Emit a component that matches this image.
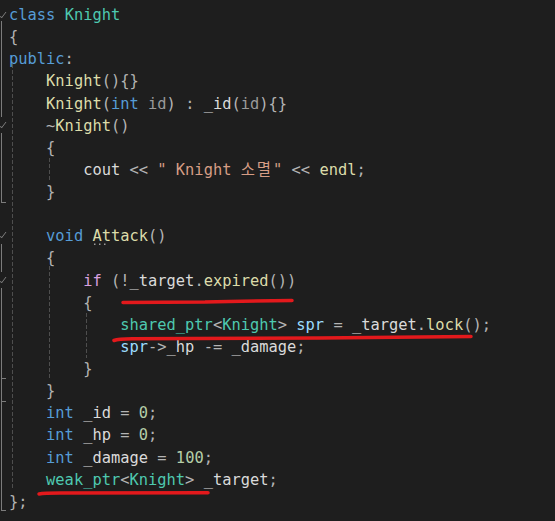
import React from 'react'

// VS dark theme token colours
const K = 'text-[#569cd6]' // keyword
const T = 'text-[#4ec9b0]' // type
const F = 'text-[#dcdcaa]' // function
const P = 'text-[#b4b4b4]' // punctuation / operator
const M = 'text-[#dadada]' // member / global
const V = 'text-[#9cdcfe]' // local
const G = 'text-[#9a9a9a]' // parameter
const S = 'text-[#d69d85]' // string
const N = 'text-[#b5cea8]' // number
const C = 'text-[#d8a0df]' // control flow
const KR = 'text-[#d69d85] tracking-[2px]' // hangul, a bit wider like the VS fallback

type Tok = [string, string]

const lines: Tok[][] = [
  [['class', K], [' ', P], ['Knight', T]],
  [['{', P]],
  [['public', K], [':', P]],
  [['    ', P], ['Knight', F], ['(){}', P]],
  [['    ', P], ['Knight', F], ['(', P], ['int', K], [' ', P], ['id', G], [') : ', P], ['_id', M], ['(', P], ['id', G], ['){}', P]],
  [['    ~', P], ['Knight', F], ['()', P]],
  [['    {', P]],
  [['        ', P], ['cout', M], [' << ', P], ['" Knight ', S], ['소멸', KR], ['"', S], [' << ', P], ['endl', F], [';', P]],
  [['    }', P]],
  [],
  [['    ', P], ['void', K], [' ', P], ['Attack', F], ['()', P]],
  [['    {', P]],
  [['        ', P], ['if', C], [' (!', P], ['_target', M], ['.', P], ['expired', F], ['())', P]],
  [['        {', P]],
  [['            ', P], ['shared_ptr', T], ['<', P], ['Knight', T], ['> ', P], ['spr', V], [' = ', P], ['_target', M], ['.', P], ['lock', F], ['();', P]],
  [['            ', P], ['spr', V], ['->', P], ['_hp', M], [' -= ', P], ['_damage', M], [';', P]],
  [['        }', P]],
  [['    }', P]],
  [['    ', P], ['int', K], [' ', P], ['_id', M], [' = ', P], ['0', N], [';', P]],
  [['    ', P], ['int', K], [' ', P], ['_hp', M], [' = ', P], ['0', N], [';', P]],
  [['    ', P], ['int', K], [' ', P], ['_damage', M], [' = ', P], ['100', N], [';', P]],
  [['    ', P], ['weak_ptr', T], ['<', P], ['Knight', T], ['> ', P], ['_target', M], [';', P]],
  [['};', P]],
]

function Margin() {
  const outline = '#7c7c7c'
  const guide = '#4e4e4e'
  return (
    <svg className="absolute left-0 top-0 pointer-events-none" width={555} height={521}>
      {/* outlining bar */}
      {[[21, 117], [133, 202], [244, 272], [288, 510]].map(([a, b]) => (
        <line key={a} x1={1.5} y1={a} x2={1.5} y2={b} stroke={outline} />
      ))}
      {[202, 378, 401, 510].map((y) => (
        <line key={y} x1={1} y1={y + 0.5} x2={6} y2={y + 0.5} stroke={outline} />
      ))}
      {[15, 125, 235, 280].map((y) => (
        <polyline key={y} points={`0.5,${y + 1} 1.5,${y + 3} 6,${y - 3}`} fill="none" stroke={outline} />
      ))}
      {/* indent guides */}
      <line x1={12.5} y1={64} x2={12.5} y2={490} stroke={guide} strokeDasharray="4 2" />
      <line x1={49.5} y1={158} x2={49.5} y2={182} stroke={guide} strokeDasharray="4 2" />
      <line x1={49.5} y1={266} x2={49.5} y2={378} stroke={guide} strokeDasharray="4 2" />
      <line x1={86.5} y1={313} x2={86.5} y2={358} stroke={guide} strokeDasharray="4 2" />
      {/* suggestion dots under Attack */}
      {[95, 100, 105].map((x) => (
        <rect key={x} x={x - 1} y={243.5} width={1.5} height={1.5} fill="#9a9a9a" />
      ))}
    </svg>
  )
}

function Scribbles() {
  return (
    <svg className="absolute left-0 top-0 pointer-events-none" width={555} height={521}>
      <g fill="none" stroke="#e3191c" strokeWidth={3.5} strokeLinecap="round">
        <path d="M123 302.5 L205 302 Q240 300.8 292 300.6" />
        <path d="M114 340.5 Q118 339 132 338.8 L320 338 Q420 337.2 471 336.6" />
        <path d="M39 494 Q44 493 60 493 L208 492.8" />
      </g>
    </svg>
  )
}

export default function App() {
  return (
    <div className="relative w-[555px] h-[521px] overflow-hidden bg-[#1e1e1e]">
      <div className="pl-[9px] pt-[4px] font-['DejaVu_Sans_Mono','Noto_Sans_CJK_KR',monospace] text-[15.4px] leading-[22.13px]">
        {lines.map((toks, i) => (
          <div key={i} className="h-[22.13px] whitespace-pre">
            {toks.map(([t, c], j) => (
              <span key={j} className={c}>{t}</span>
            ))}
          </div>
        ))}
      </div>
      <Margin />
      <Scribbles />
    </div>
  )
}
